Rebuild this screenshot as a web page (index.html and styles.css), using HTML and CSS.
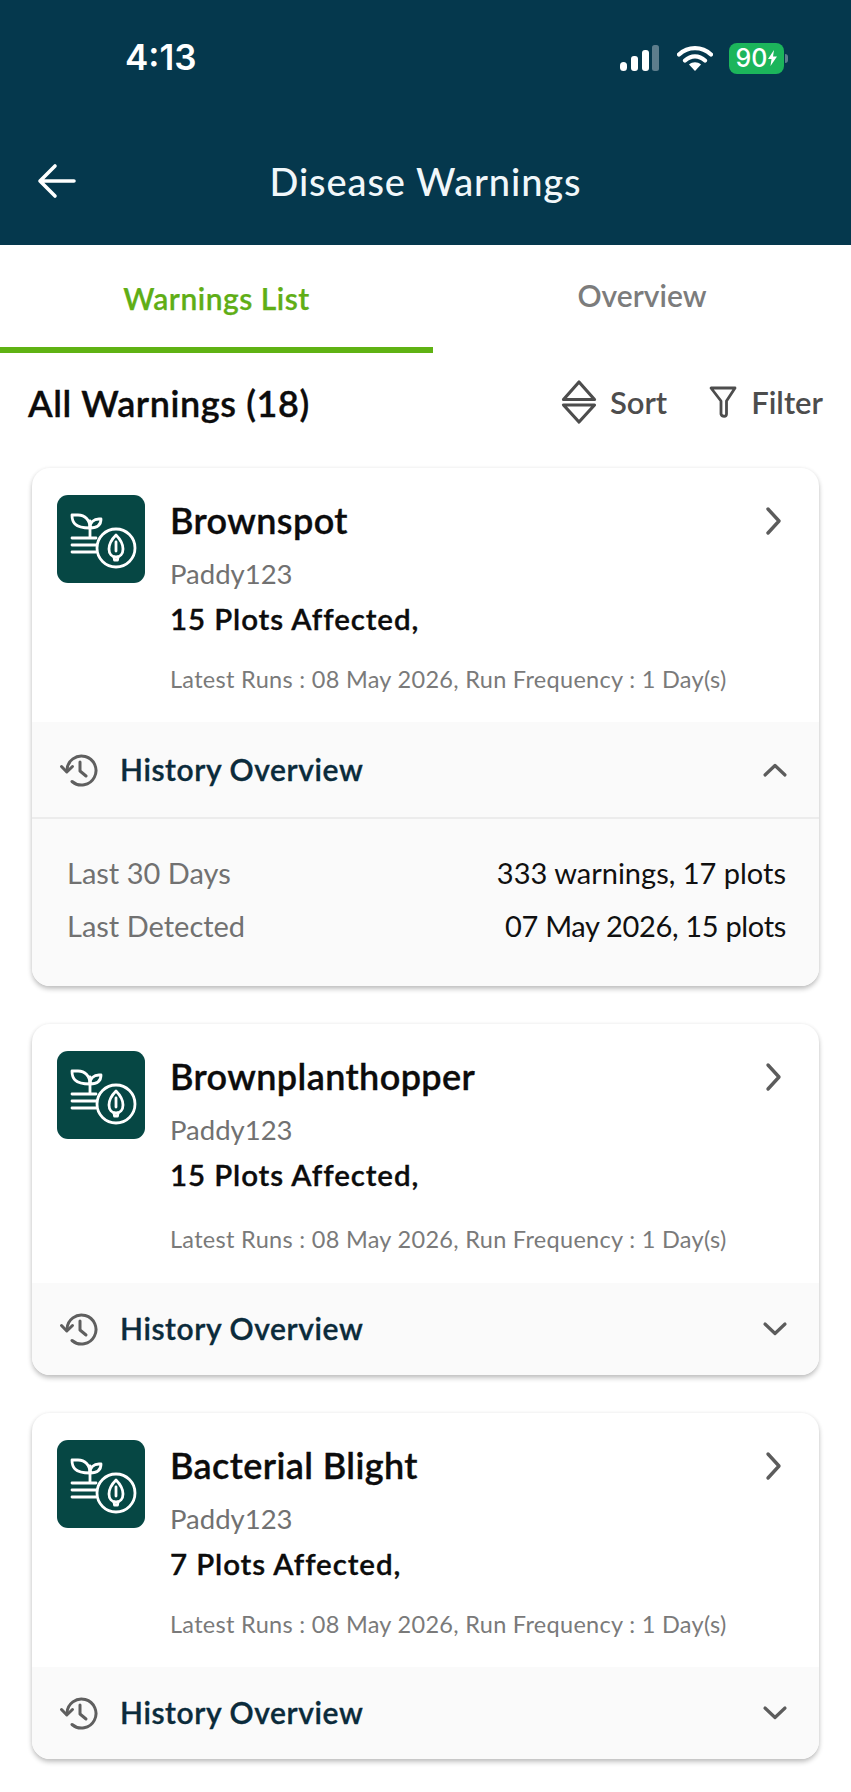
FILE: index.html
```html
<!DOCTYPE html>
<html lang="en">
<head>
<meta charset="utf-8">
<title>Disease Warnings</title>
<link rel="stylesheet" href="styles.css">
</head>
<body>
<svg class="defs" width="0" height="0" aria-hidden="true">
  <symbol id="crop" viewBox="0 0 88 88">
    <g fill="none" stroke="#fff" stroke-width="2.800" stroke-linecap="round" stroke-linejoin="round">
      <path d="M33 42V26"/>
      <path d="M15 20h6c7 0 12 5 12 13-7 0-12-1-15-4-2-2-3-5-3-9z"/>
      <path d="M33 33c0-6 4-9 9-9h2c0 6-4 9-11 9z"/>
      <path d="M15 43h24M15 50h24M15 57h24"/>
      <circle cx="59" cy="53" r="19"/>
      <path d="M59 40c4 4 7 9 7 14 0 5-3 8-7 8s-7-3-7-8c0-5 3-10 7-14z"/>
      <path d="M59 47v9M57 62l.500 3h3l.500-3"/>
    </g>
  </symbol>
  <symbol id="history" viewBox="0 0 40 40">
    <g fill="none" stroke="#5f5f5f" stroke-width="3" stroke-linecap="round" stroke-linejoin="round">
      <path d="M8 20a14.500 14.500 0 1 1 5 11.500"/>
      <path d="M2.500 16.500L7.800 22l5.700-5.500"/>
      <path d="M21 12v9l6 5"/>
    </g>
  </symbol>
  <symbol id="chev-right" viewBox="0 0 24 32">
    <path d="M6 4l11 12L6 28" fill="none" stroke="#5c5c5c" stroke-width="3.400" stroke-linecap="round" stroke-linejoin="round"/>
  </symbol>
  <symbol id="chev-down" viewBox="0 0 30 20">
    <path d="M5 5l10 9.500L25 5" fill="none" stroke="#5c5c5c" stroke-width="3.200" stroke-linecap="round" stroke-linejoin="round"/>
  </symbol>
  <symbol id="chev-up" viewBox="0 0 30 20">
    <path d="M5 15l10-9.500L25 15" fill="none" stroke="#5c5c5c" stroke-width="3.200" stroke-linecap="round" stroke-linejoin="round"/>
  </symbol>
</svg>

<header class="appbar">
  <div class="status">
    <span class="clock">4:13</span>
    <div class="status-icons">
      <svg class="signal" width="44" height="28" viewBox="0 0 44 28">
        <rect x="1" y="18" width="7" height="9" rx="3.500" fill="#fff"/>
        <rect x="12" y="12" width="7" height="15" rx="3" fill="#fff"/>
        <rect x="23" y="6" width="7" height="21" rx="3" fill="#fff"/>
        <rect x="33" y="1" width="7" height="26" rx="2.500" fill="#5d7d8c"/>
      </svg>
      <svg class="wifi" width="36" height="28" viewBox="0 0 36 28">
        <path d="M2 10.500C11 2 25 2 34 10.500M8 16.500c6-5.500 14-5.500 20 0" fill="none" stroke="#fff" stroke-width="4.200" stroke-linecap="round"/>
        <path d="M12 20.500c3.500-3 8.500-3 12 0L18 27z" fill="#fff"/>
      </svg>
      <div class="battery"><span class="battery-num">90</span><svg class="bolt" width="9" height="16" viewBox="0 0 9 16"><path d="M6 0L0 9h3.500L2.500 16 9 6.500H5z" fill="#fff"/></svg></div>
      <span class="battery-cap"></span>
    </div>
  </div>
  <div class="titlebar">
    <svg class="back" width="40" height="36" viewBox="0 0 40 36"><path d="M37 18H3M18 3L3 18l15 15" fill="none" stroke="#fff" stroke-width="3.600" stroke-linecap="round" stroke-linejoin="round"/></svg>
    <h1 class="title">Disease Warnings</h1>
  </div>
</header>

<nav class="tabs">
  <div class="tab tab-active">Warnings List</div>
  <div class="tab tab-idle">Overview</div>
</nav>

<section class="toolbar">
  <h2 class="count">All Warnings (18)</h2>
  <div class="actions">
    <div class="action">
      <svg width="38" height="46" viewBox="0 0 38 46"><path d="M3.500 20.500L19 3l15.500 17.500zM3.500 26h31L19 43z" fill="none" stroke="#4d4d4d" stroke-width="3.200" stroke-linejoin="round"/></svg>
      <span>Sort</span>
    </div>
    <div class="action action-filter">
      <svg width="28" height="32" viewBox="0 0 28 32"><path d="M2 2h24l-8.500 13v13c0 3-4.500 3-5.500 0V15z" fill="none" stroke="#4d4d4d" stroke-width="2.800" stroke-linejoin="round"/></svg>
      <span>Filter</span>
    </div>
  </div>
</section>

<main class="list">
  <article class="card">
    <div class="card-main">
      <svg class="crop"><use href="#crop"/></svg>
      <div class="info">
        <h3 class="name">Brownspot</h3>
        <p class="plot">Paddy123</p>
        <p class="affected">15 Plots Affected,</p>
        <p class="runs">Latest Runs : 08 May 2026, Run Frequency : 1 Day(s)</p>
      </div>
      <svg class="go"><use href="#chev-right"/></svg>
    </div>
    <div class="hist hist-open">
      <svg class="hist-icon"><use href="#history"/></svg>
      <span class="hist-label">History Overview</span>
      <svg class="toggle"><use href="#chev-up"/></svg>
    </div>
    <div class="details">
      <div class="row"><span class="row-key">Last 30 Days</span><span class="row-val">333 warnings, 17 plots</span></div>
      <div class="row"><span class="row-key">Last Detected</span><span class="row-val row-val-tight">07 May 2026, 15 plots</span></div>
    </div>
  </article>

  <article class="card">
    <div class="card-main card-main-tall">
      <svg class="crop"><use href="#crop"/></svg>
      <div class="info">
        <h3 class="name">Brownplanthopper</h3>
        <p class="plot">Paddy123</p>
        <p class="affected">15 Plots Affected,</p>
        <p class="runs">Latest Runs : 08 May 2026, Run Frequency : 1 Day(s)</p>
      </div>
      <svg class="go"><use href="#chev-right"/></svg>
    </div>
    <div class="hist">
      <svg class="hist-icon"><use href="#history"/></svg>
      <span class="hist-label">History Overview</span>
      <svg class="toggle"><use href="#chev-down"/></svg>
    </div>
  </article>

  <article class="card">
    <div class="card-main">
      <svg class="crop"><use href="#crop"/></svg>
      <div class="info">
        <h3 class="name">Bacterial Blight</h3>
        <p class="plot">Paddy123</p>
        <p class="affected">7 Plots Affected,</p>
        <p class="runs">Latest Runs : 08 May 2026, Run Frequency : 1 Day(s)</p>
      </div>
      <svg class="go"><use href="#chev-right"/></svg>
    </div>
    <div class="hist">
      <svg class="hist-icon"><use href="#history"/></svg>
      <span class="hist-label">History Overview</span>
      <svg class="toggle"><use href="#chev-down"/></svg>
    </div>
  </article>
</main>
</body>
</html>
```
FILE: styles.css
```css
* { box-sizing: border-box; }
html, body { margin: 0; padding: 0; }
body {
  width: 851px;
  height: 1792px;
  overflow: hidden;
  background: #fff;
  font-family: Lato, "Noto Sans", sans-serif;
  color: #0c0c0c;
}
h1, h2, h3, p { margin: 0; font-weight: inherit; font-size: inherit; }
.defs { display: block; height: 0; }

.appbar { height: 245px; background: #05384d; color: #fff; }
.status { height: 149px; padding: 36px 63px 0 125px; display: flex; justify-content: space-between; align-items: flex-start; }
.clock { font-family: Inter, sans-serif; font-weight: 600; font-size: 35px; line-height: 42px; }
.status-icons { display: flex; align-items: center; height: 42px; margin-top: 1px; }
.signal { margin-right: 14px; }
.wifi { margin-right: 16px; }
.battery { width: 55px; height: 31px; border-radius: 8px; background: #1cb55b; display: flex; align-items: center; justify-content: center; gap: 1px; }
.battery-num { font-family: Inter, sans-serif; font-size: 25px; font-weight: 500; line-height: 31px; }
.battery-cap { width: 3px; height: 9px; background: #5d7d8c; border-radius: 0 3px 3px 0; margin-left: 1px; }
.titlebar { height: 64px; padding-left: 37px; position: relative; display: flex; align-items: center; }
.back { display: block; }
.title { position: absolute; left: 0; right: 0; top: 0; text-align: center; font-size: 38px; letter-spacing: .9px; line-height: 64px; font-weight: 500; color: #f1f7fa; }

.tabs { display: flex; height: 108px; }
.tab { font-size: 30px; text-align: center; font-weight: 600; }
.tab-active { width: 433px; color: #5fae16; line-height: 106px; border-bottom: 6px solid #5fb213; letter-spacing: .5px; -webkit-text-stroke: .25px #5fae16; }
.tab-idle { flex: 1; color: #7c7c7c; line-height: 101px; }

.toolbar { height: 115px; padding: 0 28px; display: flex; justify-content: space-between; align-items: flex-start; }
.count { font-size: 36px; font-weight: 600; line-height: 46px; margin-top: 27px; letter-spacing: .6px; -webkit-text-stroke: .35px #0c0c0c; }
.actions { display: flex; align-items: center; margin-top: 26px; }
.action { display: flex; align-items: center; gap: 12px; font-size: 31px; font-weight: 600; color: #4d4d4d; height: 46px; }
.action-filter { margin-left: 42px; gap: 14px; }

.list { padding: 0 32px; display: flex; flex-direction: column; gap: 38px; }
.card { border-radius: 18px; background: #fff; overflow: hidden; box-shadow: 0 3px 5px rgba(0,0,0,.24), 0 0 4px rgba(0,0,0,.05); }
.card-main { height: 254px; padding: 27px 33px 0 25px; display: flex; align-items: flex-start; }
.card-main-tall { height: 259px; }
.crop { width: 88px; height: 88px; border-radius: 11px; background: #064744; flex: none; }
.info { flex: 1; margin-left: 25px; }
.name { font-size: 36px; font-weight: 600; line-height: 52px; margin-top: -1px; letter-spacing: .4px; -webkit-text-stroke: .35px #0c0c0c; }
.plot { font-size: 27.500px; color: #717171; line-height: 40px; margin-top: 8px; }
.affected { font-size: 29.500px; font-weight: 600; line-height: 40px; margin-top: 5px; letter-spacing: .9px; -webkit-text-stroke: .35px #0c0c0c; }
.runs { font-size: 23.500px; color: #7a7a7a; line-height: 32px; margin-top: 24px; letter-spacing: .3px; }
.card-main-tall .runs { margin-top: 28px; }
.go { width: 24px; height: 32px; margin-top: 10px; flex: none; }

.hist { height: 92px; background: #fafafa; display: flex; align-items: center; padding: 0 29px 0 27px; }
.hist-open { height: 97px; border-bottom: 2px solid #ececec; }
.hist-icon { width: 40px; height: 40px; flex: none; }
.hist-label { flex: 1; margin-left: 21px; margin-top: -2px; font-size: 30px; font-weight: 600; color: #0b2b3b; letter-spacing: .6px; -webkit-text-stroke: .35px #0b2b3b; }
.toggle { width: 30px; height: 20px; flex: none; }

.details { background: #fafafa; padding: 32px 33px 23px 35px; height: 167px; }
.row { display: flex; justify-content: space-between; font-size: 29px; line-height: 44px; margin-bottom: 9px; }
.row-key { color: #717171; }
.row-val { color: #101010; }
.row-val-tight { letter-spacing: -.33px; }
```
